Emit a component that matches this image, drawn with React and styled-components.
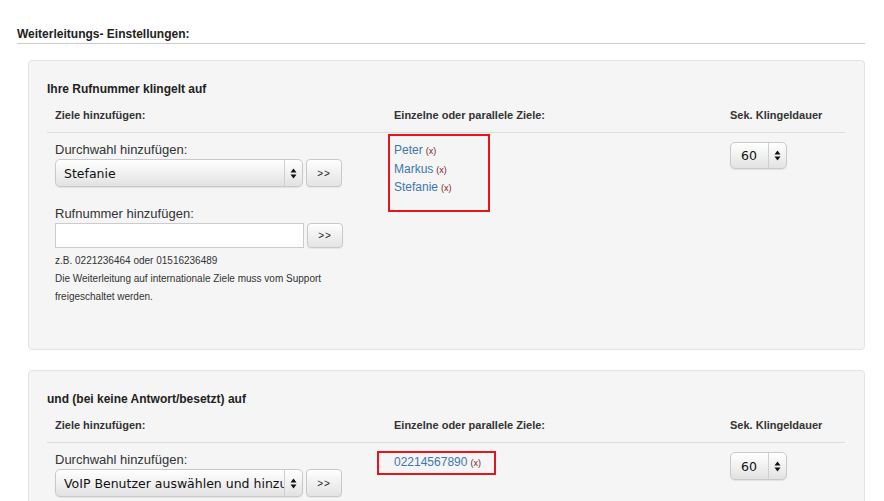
import React from "react";
import styled, { createGlobalStyle } from "styled-components";

const GlobalStyle = createGlobalStyle`
  html, body {
    margin: 0;
    padding: 0;
    background: #fff;
    font-family: "Liberation Sans", Arial, sans-serif;
    color: #333;
  }
`;

const Page = styled.div`
  padding: 26px 19px 0 17px;
`;

const PageTitle = styled.div`
  font-size: 12px;
  font-weight: bold;
  line-height: 17px;
  color: #222;
  border-bottom: 1px solid #ccc;
  margin-bottom: 16px;
`;

const Panel = styled.div`
  margin-left: 11px;
  background: #f5f5f5;
  border: 1px solid #e3e3e3;
  border-radius: 4px;
  padding: 19px 19px 35px 18px;
  margin-bottom: 20px;
`;

const PanelTitle = styled.div`
  font-size: 12px;
  font-weight: bold;
  line-height: 18px;
  color: #222;
`;

const Table = styled.div`
  display: grid;
  grid-template-columns: 339px 336px 1fr;
`;

const HeadCell = styled.div`
  padding: 8px;
  font-size: 11px;
  font-weight: bold;
  line-height: 18px;
  color: #333;
  border-bottom: 1px solid #ddd;
`;

const Cell = styled.div`
  padding: 8px;
  min-width: 0;
`;

const Label = styled.div`
  font-size: 13px;
  line-height: 18px;
  color: #333;
  margin-top: ${(p) => p.$top || 0}px;
`;

const Row = styled.div`
  display: flex;
  align-items: stretch;
  gap: 3px;
`;

const SelectWrap = styled.div`
  display: flex;
  width: ${(p) => p.$width}px;
  height: ${(p) => p.$height}px;
  box-sizing: border-box;
  margin-top: ${(p) => p.$top || 0}px;
  border: 1px solid #c9c9c9;
  border-radius: 5px;
  background: linear-gradient(#ffffff, #f1f1f1 50%, #e2e2e2);
  box-shadow: 0 1px 1px rgba(0, 0, 0, 0.08);
  overflow: hidden;
`;

const Select = styled.select`
  appearance: none;
  -webkit-appearance: none;
  flex: 1;
  min-width: 0;
  border: none;
  background: transparent;
  font-family: "DejaVu Sans", "Liberation Sans", sans-serif;
  font-size: 12.5px;
  color: #111;
  padding: 0 0 0 ${(p) => p.$pad || 8}px;
  outline: none;
`;

const Arrow = styled.div`
  width: 17px;
  flex: none;
  border-left: 1px solid #cfcfcf;
  display: flex;
  align-items: center;
  justify-content: center;
`;

const Button = styled.button`
  width: 36px;
  box-sizing: border-box;
  border: 1px solid #c9c9c9;
  border-radius: 4px;
  background: linear-gradient(#ffffff, #f0f0f0 50%, #e4e4e4);
  font-family: "Liberation Sans", Arial, sans-serif;
  font-size: 10px;
  letter-spacing: 1px;
  color: #222;
  padding: 0;
  box-shadow: 0 1px 1px rgba(0, 0, 0, 0.06);
`;

const Input = styled.input`
  width: 249px;
  height: 25px;
  box-sizing: border-box;
  border: 1px solid #ccc;
  background: #fff;
  margin: 0;
`;

const Hint = styled.div`
  font-size: 10px;
  line-height: 18px;
  color: #333;
  margin-top: 4px;
`;

const Targets = styled.div`
  border: 2px solid #e8141b;
  box-sizing: border-box;
  width: ${(p) => p.$width}px;
  height: ${(p) => p.$height}px;
  margin: ${(p) => p.$margin};
  padding: ${(p) => p.$padding};
`;

const Target = styled.div`
  font-size: 12px;
  line-height: 18px;
  height: 18.5px;
  white-space: nowrap;
`;

const Name = styled.a`
  color: #3e77b0;
  text-decoration: none;
`;

const Remove = styled.span`
  color: #7a1f1f;
  font-size: 9px;
  line-height: 1;
  margin-left: 3px;
`;

function Updown() {
  return (
    <svg width="7" height="11" viewBox="0 0 7 11">
      <path d="M3.5 0.5 L6.5 4.5 L0.5 4.5 Z" fill="#111" />
      <path d="M3.5 10.5 L6.5 6.5 L0.5 6.5 Z" fill="#111" />
    </svg>
  );
}

function Dropdown({ width, height, top, value, pad }) {
  return (
    <SelectWrap $width={width} $height={height} $top={top}>
      <Select $pad={pad} defaultValue={value}>
        <option>{value}</option>
      </Select>
      <Arrow>
        <Updown />
      </Arrow>
    </SelectWrap>
  );
}

function Headers() {
  return (
    <>
      <HeadCell>Ziele hinzufügen:</HeadCell>
      <HeadCell>Einzelne oder parallele Ziele:</HeadCell>
      <HeadCell>Sek. Klingeldauer</HeadCell>
    </>
  );
}

export default function App() {
  return (
    <Page>
      <GlobalStyle />
      <PageTitle>Weiterleitungs- Einstellungen:</PageTitle>

      <Panel>
        <PanelTitle>Ihre Rufnummer klingelt auf</PanelTitle>
        <Table>
          <Headers />
          <Cell>
            <Label>Durchwahl hinzufügen:</Label>
            <Row>
              <Dropdown width={248} height={28} value="Stefanie" pad={8} />
              <Button>&gt;&gt;</Button>
            </Row>
            <Label $top={18}>Rufnummer hinzufügen:</Label>
            <Row>
              <Input type="text" />
              <Button>&gt;&gt;</Button>
            </Row>
            <Hint>
              z.B. 0221236464 oder 01516236489
              <br />
              Die Weiterleitung auf internationale Ziele muss vom Support
              <br />
              freigeschaltet werden.
            </Hint>
          </Cell>
          <Cell>
            <Targets $width={102} $height={78} $margin="-7px 0 0 -6px" $padding="5px 4px">
              <Target>
                <Name href="#">Peter</Name>
                <Remove>(x)</Remove>
              </Target>
              <Target>
                <Name href="#">Markus</Name>
                <Remove>(x)</Remove>
              </Target>
              <Target>
                <Name href="#">Stefanie</Name>
                <Remove>(x)</Remove>
              </Target>
            </Targets>
          </Cell>
          <Cell>
            <Dropdown width={57} height={27} top={1} value="60" pad={10} />
          </Cell>
        </Table>
      </Panel>

      <Panel>
        <PanelTitle>und (bei keine Antwort/besetzt) auf</PanelTitle>
        <Table>
          <Headers />
          <Cell>
            <Label>Durchwahl hinzufügen:</Label>
            <Row>
              <Dropdown width={248} height={28} value="VoIP Benutzer auswählen und hinzufügen" pad={8} />
              <Button>&gt;&gt;</Button>
            </Row>
          </Cell>
          <Cell>
            <Targets $width={119} $height={24} $margin="0 0 0 -17px" $padding="0 0 0 15px">
              <Target>
                <Name href="#">02214567890</Name>
                <Remove>(x)</Remove>
              </Target>
            </Targets>
          </Cell>
          <Cell>
            <Dropdown width={57} height={28} top={1} value="60" pad={10} />
          </Cell>
        </Table>
      </Panel>
    </Page>
  );
}
